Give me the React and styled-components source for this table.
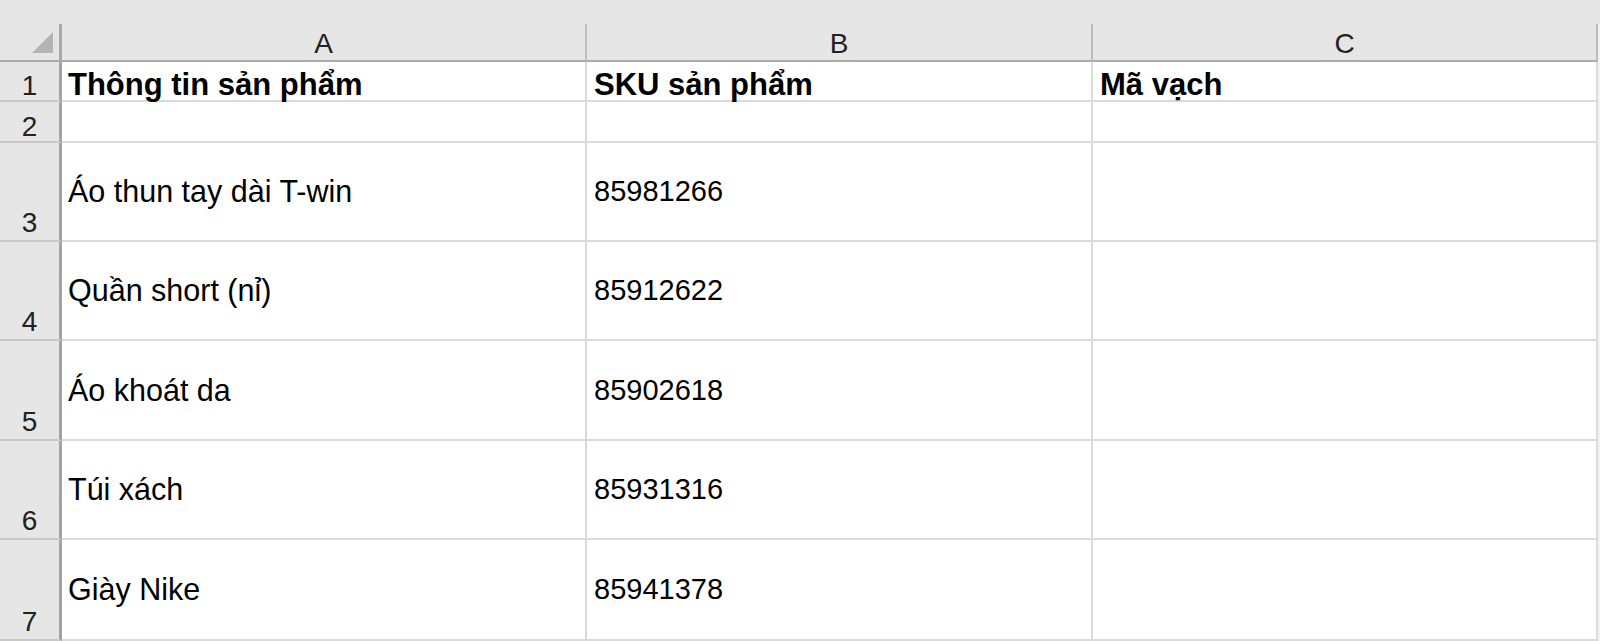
import React from "react";
import styled, { createGlobalStyle } from "styled-components";

const GlobalStyle = createGlobalStyle`
  html, body { margin: 0; padding: 0; background: #f2f2f2; }
  * { box-sizing: border-box; }
`;

const Page = styled.div`
  width: 1600px;
  height: 641px;
  overflow: hidden;
  display: flex;
  flex-direction: column;
  background: #f2f2f2;
  font-family: "Liberation Sans", Arial, sans-serif;
  color: #000;
`;

const TopBand = styled.div`
  height: 24px;
  flex: none;
  background: #e6e6e6;
`;

const Grid = styled.div`
  display: grid;
  grid-template-columns: 62px 525px 506px 505px;
  grid-template-rows: 38px 40px 41px 99px 99px 100px 99px 101px;
  background: #e6e6e6;
  width: 1598px;
`;

const Corner = styled.div`
  background: #e6e6e6;
  border-right: 3px solid #a9a9a9;
  border-bottom: 2px solid #ababab;
  display: flex;
  justify-content: flex-end;
  align-items: flex-end;
  padding: 0 6px 7px 0;
`;

const ColHeader = styled.div`
  background: #e6e6e6;
  border-right: 2px solid #bdbdbd;
  border-bottom: 2px solid #ababab;
  display: flex;
  justify-content: center;
  align-items: flex-end;
  padding-bottom: 2px;
  font-size: 28px;
  line-height: 1;
  color: #222;
`;

const RowHeader = styled.div`
  background: #e6e6e6;
  border-right: 3px solid #a3a3a3;
  border-bottom: 2px solid #c9c9c9;
  display: flex;
  justify-content: center;
  align-items: flex-end;
  padding-bottom: ${(p) => (p.$tall ? "3px" : "0")};
  font-size: 28px;
  line-height: 1;
  color: #222;
`;

const Cell = styled.div`
  background: #fff;
  border-right: 2px solid #dadada;
  border-bottom: 2px solid #dadada;
  display: flex;
  align-items: ${(p) => (p.$tall ? "center" : "flex-end")};
  padding-left: ${(p) => (p.$first ? "6px" : "7px")};
  font-size: ${(p) => (p.$bold ? "31px" : p.$numeric ? "29px" : "30.5px")};
  font-weight: ${(p) => (p.$bold ? 700 : 400)};
  line-height: 1;
  white-space: nowrap;
`;

const CornerMark = () => (
  <svg width="21" height="21" viewBox="0 0 21 21">
    <polygon points="21,0 21,21 0,21" fill="#b4b4b4" />
  </svg>
);

const columns = ["A", "B", "C"];

const rows = [
  { n: 1, cells: ["Thông tin sản phẩm", "SKU sản phẩm", "Mã vạch"], bold: true },
  { n: 2, cells: ["", "", ""] },
  { n: 3, cells: ["Áo thun tay dài T-win", "85981266", ""], tall: true },
  { n: 4, cells: ["Quần short (nỉ)", "85912622", ""], tall: true },
  { n: 5, cells: ["Áo khoát da", "85902618", ""], tall: true },
  { n: 6, cells: ["Túi xách", "85931316", ""], tall: true },
  { n: 7, cells: ["Giày Nike", "85941378", ""], tall: true },
];

export default function App() {
  return (
    <>
      <GlobalStyle />
      <Page>
        <TopBand />
        <Grid>
          <Corner>
            <CornerMark />
          </Corner>
          {columns.map((c) => (
            <ColHeader key={c}>{c}</ColHeader>
          ))}
          {rows.map((r) => (
            <React.Fragment key={r.n}>
              <RowHeader $tall={r.tall}>{r.n}</RowHeader>
              {r.cells.map((v, i) => (
                <Cell
                  key={i}
                  $first={i === 0}
                  $bold={r.bold}
                  $tall={r.tall}
                  $numeric={i === 1 && !r.bold}
                >
                  {v}
                </Cell>
              ))}
            </React.Fragment>
          ))}
        </Grid>
      </Page>
    </>
  );
}
